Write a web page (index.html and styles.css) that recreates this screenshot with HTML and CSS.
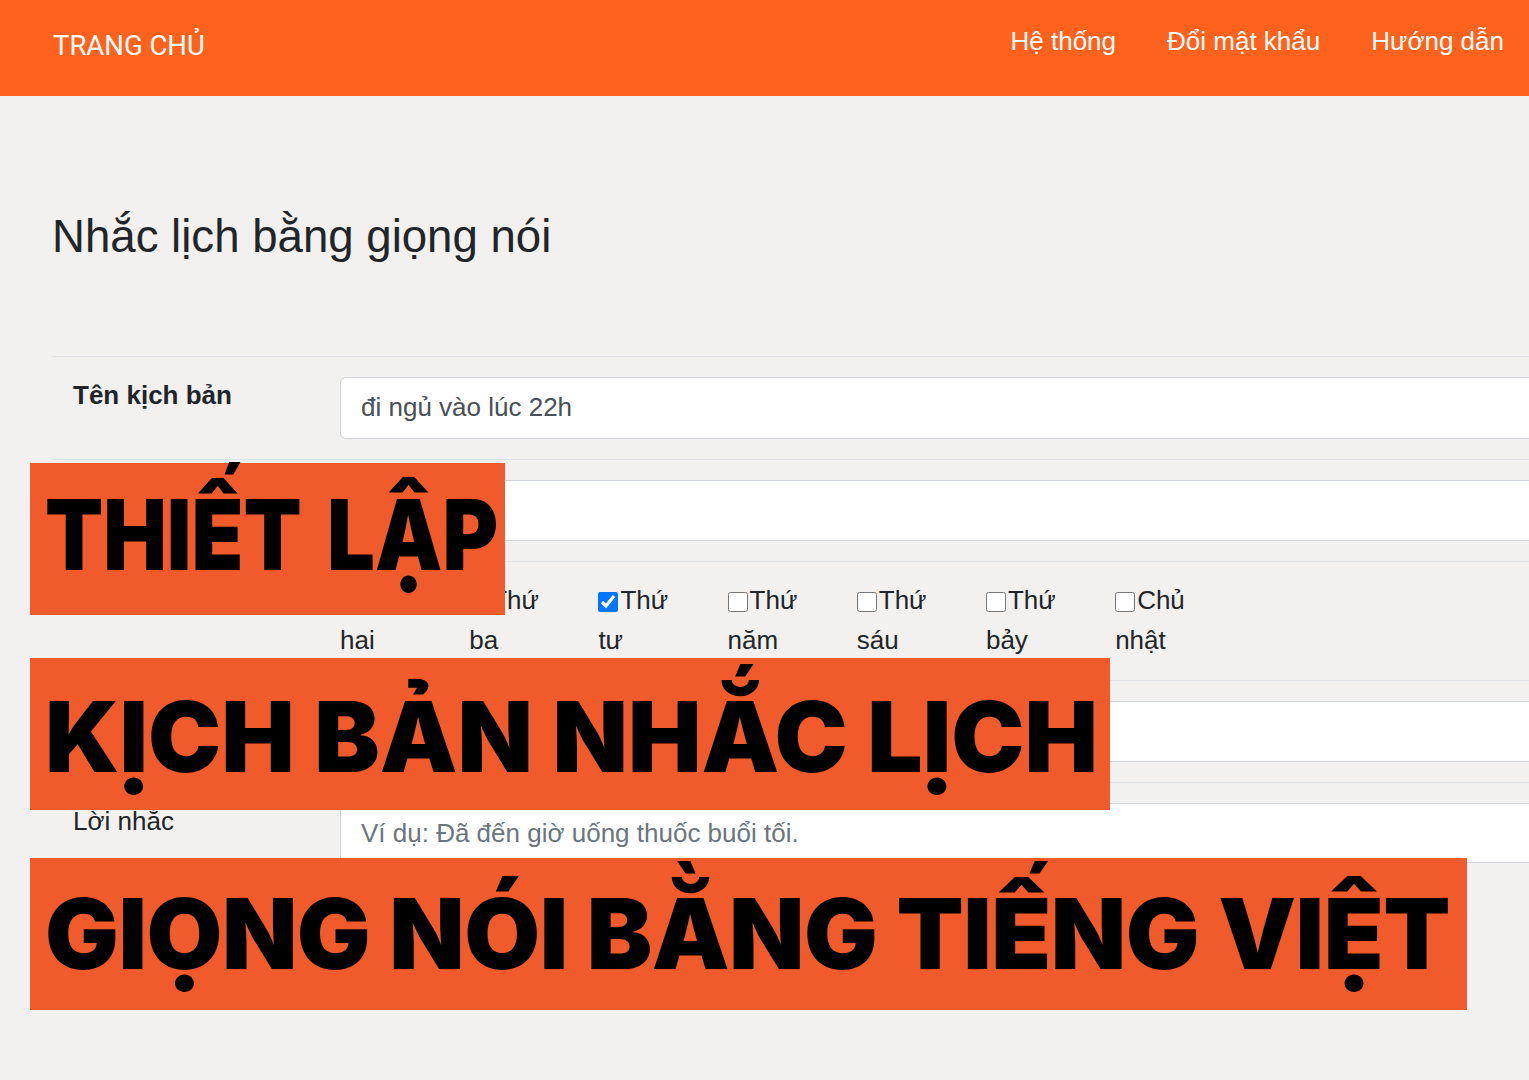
FILE: index.html
```html
<!DOCTYPE html>
<html lang="vi">
<head>
    <meta charset="UTF-8">
    <meta name="viewport" content="width=device-width, initial-scale=1.0">
    <title>Nhắc lịch bằng giọng nói</title>
    <link rel="stylesheet" href="styles.css">
</head>
<body>
    <header class="topbar">
        <a class="brand" href="#">TRANG CHỦ</a>
        <nav class="menu">
            <a href="#">Hệ thống</a>
            <a href="#">Đổi mật khẩu</a>
            <a href="#">Hướng dẫn</a>
        </nav>
    </header>

    <main class="page">
        <h1 class="page-title">Nhắc lịch bằng giọng nói</h1>

        <form class="form-table">
            <div class="form-row">
                <label class="form-label bold" for="name">Tên kịch bản</label>
                <div class="form-field">
                    <input type="text" id="name" class="form-control" value="đi ngủ vào lúc 22h">
                </div>
            </div>
            <div class="form-row">
                <span class="form-label"></span>
                <div class="form-field">
                    <input type="text" id="time" class="form-control">
                </div>
            </div>
            <div class="form-row days-row">
                <span class="form-label"></span>
                <div class="days">
                    <label class="day"><input type="checkbox">Thứ hai</label>
                    <label class="day"><input type="checkbox">Thứ ba</label>
                    <label class="day"><input type="checkbox" checked>Thứ tư</label>
                    <label class="day"><input type="checkbox">Thứ năm</label>
                    <label class="day"><input type="checkbox">Thứ sáu</label>
                    <label class="day"><input type="checkbox">Thứ bảy</label>
                    <label class="day"><input type="checkbox">Chủ nhật</label>
                </div>
            </div>
            <div class="form-row">
                <span class="form-label"></span>
                <div class="form-field">
                    <input type="text" id="voice" class="form-control">
                </div>
            </div>
            <div class="form-row last">
                <label class="form-label" for="message">Lời nhắc</label>
                <div class="form-field">
                    <textarea id="message" class="form-control" rows="1" placeholder="Ví dụ: Đã đến giờ uống thuốc buổi tối."></textarea>
                </div>
            </div>
        </form>
    </main>

    <!-- caption bands laid over the screenshot -->
    <div class="banner banner-1"><span class="squeeze">THIẾT LẬP</span></div>
    <div class="banner banner-2">KỊCH BẢN NHẮC LỊCH</div>
    <div class="banner banner-3">GIỌNG NÓI BẰNG TIẾNG VIỆT</div>
</body>
</html>
```

FILE: styles.css
```css
* {
    margin: 0;
    padding: 0;
    box-sizing: border-box;
}

html, body {
    overflow: hidden;
}

body {
    position: relative;
    min-height: 1080px;
    background-color: #f2f1ef;
    font-family: 'Liberation Sans', Arial, sans-serif;
    font-size: 26px;
    color: #212529;
}

.topbar {
    display: flex;
    height: 96px;
    padding-left: 53px;
    background-color: #ff621c;
}

.brand {
    font-family: 'Roboto', sans-serif;
    font-size: 27.5px;
    line-height: 92px;
    color: #fff;
    text-decoration: none;
}

.menu {
    display: flex;
    margin-left: auto;
}

.menu a {
    padding: 0 25px 0 26px;
    font-size: 26px;
    line-height: 82px;
    color: #fff;
    text-decoration: none;
}

.page {
    padding: 114px 0 0 52px;
}

.page-title {
    margin-bottom: 92px;
    font-size: 45.6px;
    font-weight: 400;
    line-height: 54px;
    color: #212529;
}

.form-table {
    margin-right: -60px;
}

.form-row {
    display: grid;
    grid-template-columns: 288px 1fr;
    padding: 20px 0;
    border-top: 1.5px solid #dee2e6;
}

.form-row.days-row {
    padding: 18px 0 19.5px;
}

.form-row.last {
    padding-bottom: 0;
}

.form-label {
    padding-left: 21px;
    line-height: 36px;
}

.form-label.bold {
    font-weight: 700;
}

.form-control {
    display: block;
    width: 100%;
    height: 61.5px;
    padding: 0 20px;
    border: 1.5px solid #ced4da;
    border-radius: 6px;
    background: #fff;
    font-family: inherit;
    font-size: 26px;
    color: #495057;
    outline: none;
}

textarea.form-control {
    height: 60px;
    padding-top: 11px;
    line-height: 36px;
    resize: none;
}

.form-control::placeholder {
    color: #6c757d;
}

.days {
    display: grid;
    grid-template-columns: repeat(7, 84px);
    column-gap: 45.2px;
    line-height: 40px;
}

.day input {
    width: 20px;
    height: 20px;
    margin: 0 2px 0 0;
    vertical-align: -3px;
}

.banner {
    position: absolute;
    left: 30px;
    height: 152px;
    padding-left: 15px;
    background-color: #f15a2b;
    color: #000;
    font-family: 'Inter', 'Liberation Sans', sans-serif;
    font-size: 98px;
    font-weight: 900;
    line-height: 144px;
    white-space: nowrap;
}

.banner-1 {
    top: 463px;
    width: 475px;
    word-spacing: 10px;
}

.squeeze {
    display: inline-block;
    transform: scaleX(0.865);
    transform-origin: left center;
}

.banner-2 {
    top: 658px;
    width: 1080px;
    padding-top: 7px;
}

.banner-3 {
    top: 858px;
    width: 1437px;
    padding-top: 4px;
    letter-spacing: -0.5px;
}
```
